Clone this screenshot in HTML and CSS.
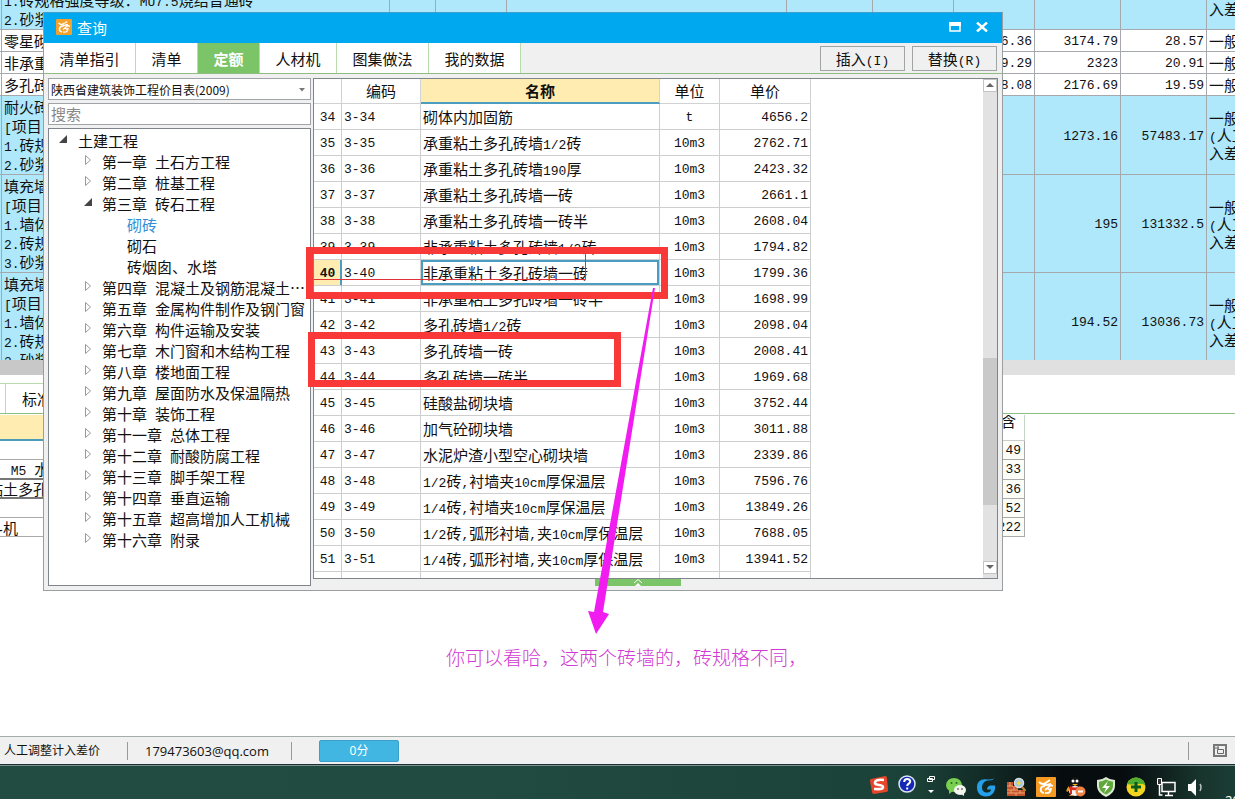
FILE: index.html
```html
<!DOCTYPE html>
<html lang="zh-CN">
<head>
<meta charset="utf-8">
<title>查询</title>
<link rel="stylesheet" href="styles.css">
</head>
<body>
<div class="desktop">
  <main class="app">
    <div class="budget">
      <table class="budget-table">
        <colgroup><col class="c-edge"><col class="c-desc"><col class="c-a"><col class="c-b"><col class="c-c"><col class="c-d"><col class="c-e"><col class="c-e"><col class="c-d"><col class="c-d"><col class="c-f"></colgroup>
        <tbody>
          <tr class="r-first blue"><td></td><td><div class="tail"><span class="m">1.</span>砖规格强度等级：<span class="m">MU7.5</span>烧结普通砖<br><span class="m">2.</span>砂浆</div></td><td></td><td></td><td></td><td></td><td></td><td></td><td></td><td></td><td class="fee"><div class="tail fee-tail">入差</div></td></tr>
          <tr class="r-line"><td></td><td>零星砌</td><td></td><td></td><td></td><td></td><td></td><td class="num">6.36</td><td class="num">3174.79</td><td class="num">28.57</td><td class="fee">一般</td></tr>
          <tr class="r-line"><td></td><td>非承重</td><td></td><td></td><td></td><td></td><td></td><td class="num">9.29</td><td class="num">2323</td><td class="num">20.91</td><td class="fee">一般</td></tr>
          <tr class="r-line"><td></td><td>多孔砖</td><td></td><td></td><td></td><td></td><td></td><td class="num">8.08</td><td class="num">2176.69</td><td class="num">19.59</td><td class="fee">一般</td></tr>
          <tr class="r-four blue"><td></td><td>耐火砖<br><span class="m">[</span>项目<br><span class="m">1.</span>砖规<br><span class="m">2.</span>砂浆</td><td></td><td></td><td></td><td></td><td></td><td></td><td class="num">1273.16</td><td class="num">57483.17</td><td class="fee">一般<br><span class="m">(</span>人工<br>入差</td></tr>
          <tr class="r-five blue"><td></td><td>填充墙<br><span class="m">[</span>项目<br><span class="m">1.</span>墙体<br><span class="m">2.</span>砖规<br><span class="m">3.</span>砂浆</td><td></td><td></td><td></td><td></td><td></td><td></td><td class="num">195</td><td class="num">131332.5</td><td class="fee">一般<br><span class="m">(</span>人工<br>入差</td></tr>
          <tr class="r-five blue"><td></td><td>填充墙<br><span class="m">[</span>项目<br><span class="m">1.</span>墙体<br><span class="m">2.</span>砖规<br><span class="m">3.</span>砂浆</td><td></td><td></td><td></td><td></td><td></td><td></td><td class="num">194.52</td><td class="num">13036.73</td><td class="fee">一般<br><span class="m">(</span>人工<br>入差</td></tr>
        </tbody>
      </table>
    </div>
    <div class="splitter"><div class="splitter-thumb"></div></div>
    <div class="lower-tabs"><div class="lower-tab">标准</div></div>
    <div class="detail">
      <table class="detail-table">
        <colgroup><col class="d-name"><col><col class="d-amount"></colgroup>
        <thead><tr><th class="hot"></th><th></th><th><div class="cut">含</div></th></tr></thead>
        <tbody>
          <tr><td></td><td></td><td class="num">49</td></tr>
          <tr class="strong"><td>、<span class="m"> M5 </span>水</td><td></td><td class="num">33</td></tr>
          <tr class="strong"><td>粘土多孔</td><td></td><td class="num">36</td></tr>
          <tr><td></td><td></td><td class="num">52</td></tr>
          <tr><td>斗机</td><td></td><td class="num">222</td></tr>
        </tbody>
      </table>
    </div>
  </main>

  <footer class="status">
    <span class="status-note">人工调整计入差价</span>
    <span class="status-mail">179473603@qq.com</span>
    <button class="score" type="button">0分</button>
    <span class="status-tool">
      <svg width="14" height="13" viewBox="0 0 14 13"><path d="M1 1h12v11H1z" fill="none" stroke="#777" stroke-width="2"/><path d="M4.500 5.500h6v4h-6zM2 4h4M5 2v3" fill="none" stroke="#666"/></svg>
    </span>
  </footer>

  <div class="taskbar">
    <svg class="narrow" viewBox="0 0 18 20"><path d="M1 4 15 1q2 0 2 2l1 12q0 2-2 2L4 19q-2 0-2-2L0 6q0-2 1-2z" fill="#e5452b"/><path d="M14 5Q5 4 5 8c0 3 8 1 8 4 0 3-7 2-9 2" fill="none" stroke="#fff" stroke-width="2.600"/></svg>
    <svg class="narrow" viewBox="0 0 18 20"><circle cx="9" cy="9" r="8" fill="#1428b4" stroke="#dfe6f5" stroke-width="1.500"/><path d="M6.200 7q0-3 3-3t3 2.600c0 2-3 2-3 4.400M9.200 12.500v2" fill="none" stroke="#fff" stroke-width="2"/></svg>
    <svg class="tiny" viewBox="0 0 10 20"><path d="M3.500 1.500h5v3h-5zM1.500 3.500h5v3h-5z" fill="#17342d" stroke="#fff"/><path d="M2 15h6l-3 3z" fill="#fff"/></svg>
    <svg viewBox="0 0 20 20"><ellipse cx="8" cy="8" rx="8" ry="7" fill="#78cf50"/><path d="M3 13v4l4-3z" fill="#78cf50"/><circle cx="5.500" cy="6" r="1" fill="#2d6b25"/><circle cx="10.500" cy="6" r="1" fill="#2d6b25"/><ellipse cx="14" cy="13" rx="6" ry="5" fill="#f3f5ef"/><path d="m15 17 3 2v-3z" fill="#f3f5ef"/><circle cx="12" cy="12" r="1" fill="#777"/><circle cx="16" cy="12" r="1" fill="#777"/></svg>
    <svg viewBox="0 0 20 20"><path d="M19 1q-3 3-7 2.500C8 4 6 7 6 10.500c0 3 2 5 5 5s4-2 4-3h-4q0-3 3-4h5c1 6-3 11-9 11-6 0-9-4-9-9 0-6 4-9 10-8 4 0 6-.5 8-1.500z" fill="#25a0ea"/></svg>
    <svg viewBox="0 0 20 20"><path d="M1 5h6v4h5v4h7v6H1z" fill="#c3562e"/><path d="M1 9h6M1 13h11M1 16h18M4 5v4M8 9v4M5 13v3M14 13v3M10 16v3" stroke="#f0a36e"/><circle cx="13" cy="6" r="4.500" fill="#9cc8e8" stroke="#d9dde0" stroke-width="1.500"/><path d="m16 10 3.500 4" stroke="#b98336" stroke-width="2.500"/><path d="m13 3 1 2 2 1-2 1-1 2-1-2-2-1 2-1z" fill="#f7d63f"/></svg>
    <svg viewBox="0 0 20 20"><rect width="20" height="20" rx="1" fill="#f49a22"/><path d="M3 5q4 4 8 0M11 5l3-2M5 10l5-2 5-1M8 16c-5-1-4-7 1-7M9 13l6-5 2 1M9 16q6 1 6-5M11 11l3 2" fill="none" stroke="#fff" stroke-width="1.800"/></svg>
    <svg viewBox="0 0 20 20"><ellipse cx="9" cy="7" rx="5.500" ry="7" fill="#141414"/><ellipse cx="9" cy="14" rx="6" ry="5" fill="#f4f4f4"/><path d="M3 9q-4 4-2 6l3-2zM5 18l-3 1h7z" fill="#e99b23"/><circle cx="7" cy="4" r="1.500" fill="#fff"/><circle cx="11" cy="4" r="1.500" fill="#fff"/><path d="M6 7h6l-3 2z" fill="#f5b324"/><path d="M4 9q5 3 10 0v3q-5 2-8 1v4H4z" fill="#d92b22"/><circle cx="14.500" cy="14.500" r="5" fill="#f08243"/><path d="M12 14.500h5" stroke="#fff" stroke-width="2"/></svg>
    <svg viewBox="0 0 20 20"><path d="M10 0q4 3 9 3v6q0 7-9 11-9-4-9-11V3q5 0 9-3z" fill="#dbe9d2"/><path d="M10 2.500q3 2 7 2.300V9q0 5-7 8.500Q3 14 3 9V4.800q4-.3 7-2.300z" fill="#5fa83a"/><path d="m12 4-6 7h4l-2 5 6-7h-4z" fill="#fff"/></svg>
    <svg viewBox="0 0 20 20"><circle cx="10" cy="10" r="9.500" fill="#f3d521"/><path d="M1 7Q4 0 11 .5q7 1 8.500 8Q17 6 12 7T1 7z" fill="#4dae32"/><path d="M10 5v10M5 10h10" stroke="#075c1b" stroke-width="3"/></svg>
    <svg viewBox="0 0 20 20"><path d="M6 5.500h13v9H6z" fill="#20302f" stroke="#fff" stroke-width="1.500"/><path d="M12.500 15v3M9 18.500h8" stroke="#fff" stroke-width="1.500"/><path d="M1.500 1.500h4v6h-4z" fill="#333" stroke="#fff"/><path d="M3.500 8v10h3" fill="none" stroke="#fff" stroke-width="1.500"/></svg>
    <svg viewBox="0 0 20 20"><path d="M2 7h3l5-5v17l-5-5H2z" fill="#fff"/><path d="M14 7q2 3 0 7" fill="none" stroke="#b8c4c1" stroke-width="1.500"/></svg>
    <span class="clock">20</span>
  </div>

  <section class="dialog" aria-label="查询">
    <header class="titlebar">
      <svg width="16" height="16" viewBox="0 0 16 16"><rect width="16" height="16" rx="1" fill="#f4a12c"/><path d="M2.500 4q3 3 6 0M9 4l2-1.500M4 8l4-1.500 4-1M6 13c-4-1-3-6 1-6M7 10.500l5-4 2 1M7 13q5 1 5-4M9 9l2 1.500" fill="none" stroke="#fff" stroke-width="1.400"/></svg>
      <h1>查询</h1>
      <button type="button" class="win-btn" aria-label="最大化"><svg width="12" height="10" viewBox="0 0 12 10"><path d="M1 1h10v8H1z" fill="none" stroke="#fff" stroke-width="1.500"/><path d="M0 0h12v4H0z" fill="#fff"/></svg></button>
      <button type="button" class="win-btn" aria-label="关闭"><svg width="12" height="10" viewBox="0 0 12 10"><path d="m1 .5 10 9M11 .5l-10 9" stroke="#fff" stroke-width="2.400"/></svg></button>
    </header>
    <nav class="tabs">
      <button type="button" class="tab w-l">清单指引</button>
      <button type="button" class="tab w-s">清单</button>
      <button type="button" class="tab w-s active">定额</button>
      <button type="button" class="tab w-m">人材机</button>
      <button type="button" class="tab w-l">图集做法</button>
      <button type="button" class="tab w-l">我的数据</button>
      <div class="actions">
        <button type="button">插入<span class="m">(I)</span></button>
        <button type="button">替换<span class="m">(R)</span></button>
      </div>
    </nav>
    <div class="body">
      <aside class="side">
        <div class="combo">
          <select aria-label="定额库"><option>陕西省建筑装饰工程价目表(2009)</option></select>
          <svg width="6" height="4" viewBox="0 0 6 4"><path d="M0 0h6L3 3.500z" fill="#777"/></svg>
        </div>
        <input class="search" type="text" placeholder="搜索" aria-label="搜索">
        <ul class="tree">
          <li class="l0"><svg class="tw" viewBox="0 0 10 10"><path d="M9 1v8H1z" fill="#444"/></svg>土建工程</li>
          <li class="l1"><svg class="tw" viewBox="0 0 10 10"><path d="M2.500.5v9L7.500 5z" fill="none" stroke="#999"/></svg><span>第一章</span><span>土石方工程</span></li>
          <li class="l1"><svg class="tw" viewBox="0 0 10 10"><path d="M2.500.5v9L7.500 5z" fill="none" stroke="#999"/></svg><span>第二章</span><span>桩基工程</span></li>
          <li class="l1"><svg class="tw" viewBox="0 0 10 10"><path d="M9 1v8H1z" fill="#444"/></svg><span>第三章</span><span>砖石工程</span></li>
          <li class="l2 current">砌砖</li>
          <li class="l2">砌石</li>
          <li class="l2">砖烟囱、水塔</li>
          <li class="l1"><svg class="tw" viewBox="0 0 10 10"><path d="M2.500.5v9L7.500 5z" fill="none" stroke="#999"/></svg><span>第四章</span><span>混凝土及钢筋混凝土⋯</span></li>
          <li class="l1"><svg class="tw" viewBox="0 0 10 10"><path d="M2.500.5v9L7.500 5z" fill="none" stroke="#999"/></svg><span>第五章</span><span>金属构件制作及钢门窗</span></li>
          <li class="l1"><svg class="tw" viewBox="0 0 10 10"><path d="M2.500.5v9L7.500 5z" fill="none" stroke="#999"/></svg><span>第六章</span><span>构件运输及安装</span></li>
          <li class="l1"><svg class="tw" viewBox="0 0 10 10"><path d="M2.500.5v9L7.500 5z" fill="none" stroke="#999"/></svg><span>第七章</span><span>木门窗和木结构工程</span></li>
          <li class="l1"><svg class="tw" viewBox="0 0 10 10"><path d="M2.500.5v9L7.500 5z" fill="none" stroke="#999"/></svg><span>第八章</span><span>楼地面工程</span></li>
          <li class="l1"><svg class="tw" viewBox="0 0 10 10"><path d="M2.500.5v9L7.500 5z" fill="none" stroke="#999"/></svg><span>第九章</span><span>屋面防水及保温隔热</span></li>
          <li class="l1"><svg class="tw" viewBox="0 0 10 10"><path d="M2.500.5v9L7.500 5z" fill="none" stroke="#999"/></svg><span>第十章</span><span>装饰工程</span></li>
          <li class="l1"><svg class="tw" viewBox="0 0 10 10"><path d="M2.500.5v9L7.500 5z" fill="none" stroke="#999"/></svg><span>第十一章</span><span>总体工程</span></li>
          <li class="l1"><svg class="tw" viewBox="0 0 10 10"><path d="M2.500.5v9L7.500 5z" fill="none" stroke="#999"/></svg><span>第十二章</span><span>耐酸防腐工程</span></li>
          <li class="l1"><svg class="tw" viewBox="0 0 10 10"><path d="M2.500.5v9L7.500 5z" fill="none" stroke="#999"/></svg><span>第十三章</span><span>脚手架工程</span></li>
          <li class="l1"><svg class="tw" viewBox="0 0 10 10"><path d="M2.500.5v9L7.500 5z" fill="none" stroke="#999"/></svg><span>第十四章</span><span>垂直运输</span></li>
          <li class="l1"><svg class="tw" viewBox="0 0 10 10"><path d="M2.500.5v9L7.500 5z" fill="none" stroke="#999"/></svg><span>第十五章</span><span>超高增加人工机械</span></li>
          <li class="l1"><svg class="tw" viewBox="0 0 10 10"><path d="M2.500.5v9L7.500 5z" fill="none" stroke="#999"/></svg><span>第十六章</span><span>附录</span></li>
        </ul>
      </aside>
      <div class="main">
        <div class="panel">
          <div class="viewport">
            <table class="quota">
              <colgroup><col class="q-no"><col class="q-code"><col class="q-name"><col class="q-unit"><col class="q-price"></colgroup>
              <thead><tr><th></th><th>编码</th><th class="hot">名称</th><th>单位</th><th>单价</th></tr></thead>
              <tbody>
                <tr><td>34</td><td>3-34</td><td>砌体内加固筋</td><td>t</td><td>4656.2</td></tr>
                <tr><td>35</td><td>3-35</td><td>承重粘土多孔砖墙<span class="m">1/2</span>砖</td><td>10m3</td><td>2762.71</td></tr>
                <tr><td>36</td><td>3-36</td><td>承重粘土多孔砖墙<span class="m">190</span>厚</td><td>10m3</td><td>2423.32</td></tr>
                <tr><td>37</td><td>3-37</td><td>承重粘土多孔砖墙一砖</td><td>10m3</td><td>2661.1</td></tr>
                <tr><td>38</td><td>3-38</td><td>承重粘土多孔砖墙一砖半</td><td>10m3</td><td>2608.04</td></tr>
                <tr><td>39</td><td>3-39</td><td>非承重粘土多孔砖墙<span class="m">1/2</span>砖</td><td>10m3</td><td>1794.82</td></tr>
                <tr class="selected"><td>40</td><td>3-40</td><td>非承重粘土多孔砖墙一砖</td><td>10m3</td><td>1799.36</td></tr>
                <tr><td>41</td><td>3-41</td><td>非承重粘土多孔砖墙一砖半</td><td>10m3</td><td>1698.99</td></tr>
                <tr><td>42</td><td>3-42</td><td>多孔砖墙<span class="m">1/2</span>砖</td><td>10m3</td><td>2098.04</td></tr>
                <tr><td>43</td><td>3-43</td><td>多孔砖墙一砖</td><td>10m3</td><td>2008.41</td></tr>
                <tr><td>44</td><td>3-44</td><td>多孔砖墙一砖半</td><td>10m3</td><td>1969.68</td></tr>
                <tr><td>45</td><td>3-45</td><td>硅酸盐砌块墙</td><td>10m3</td><td>3752.44</td></tr>
                <tr><td>46</td><td>3-46</td><td>加气砼砌块墙</td><td>10m3</td><td>3011.88</td></tr>
                <tr><td>47</td><td>3-47</td><td>水泥炉渣小型空心砌块墙</td><td>10m3</td><td>2339.86</td></tr>
                <tr><td>48</td><td>3-48</td><td><span class="m">1/2</span>砖<span class="m">,</span>衬墙夹<span class="m">10cm</span>厚保温层</td><td>10m3</td><td>7596.76</td></tr>
                <tr><td>49</td><td>3-49</td><td><span class="m">1/4</span>砖<span class="m">,</span>衬墙夹<span class="m">10cm</span>厚保温层</td><td>10m3</td><td>13849.26</td></tr>
                <tr><td>50</td><td>3-50</td><td><span class="m">1/2</span>砖<span class="m">,</span>弧形衬墙<span class="m">,</span>夹<span class="m">10cm</span>厚保温层</td><td>10m3</td><td>7688.05</td></tr>
                <tr><td>51</td><td>3-51</td><td><span class="m">1/4</span>砖<span class="m">,</span>弧形衬墙<span class="m">,</span>夹<span class="m">10cm</span>厚保温层</td><td>10m3</td><td>13941.52</td></tr>
                <tr><td></td><td></td><td></td><td></td><td></td></tr>
              </tbody>
            </table>
          </div>
          <div class="scrollbar">
            <button type="button" aria-label="向上"><svg width="8" height="5" viewBox="0 0 8 5"><path d="M4 0l4 4H0z" fill="#666"/></svg></button>
            <div class="before"></div>
            <div class="thumb"></div>
            <div class="after"></div>
            <button type="button" aria-label="向下"><svg width="8" height="5" viewBox="0 0 8 5"><path d="M0 0h8L4 4z" fill="#666"/></svg></button>
          </div>
        </div>
        <button type="button" class="expand" aria-label="展开"><svg width="10" height="7" viewBox="0 0 10 7"><path d="M1 4l4-3.500L9 4" fill="none" stroke="#fff"/><path d="M2 7l3-3 3 3z" fill="#fff"/></svg></button>
      </div>
    </div>
  </section>

  <svg class="marks" width="1235" height="799" viewBox="0 0 1235 799">
    <path d="M314 279.500h271.500V254" fill="none" stroke="#e03038"/>
    <path d="M309.500 250.500h355v45h-355zM311.500 335.500h306v48h-306z" fill="none" stroke="#f93838" stroke-width="7"/>
    <path d="M655 288 603 612l6 2-13 20-8-23 6 1 59-324z" fill="#f01cf0"/>
  </svg>
  <p class="remark">你可以看哈，这两个砖墙的，砖规格不同，</p>
</div>
</body>
</html>
```
FILE: styles.css
```css
* { box-sizing: border-box; }
body {
  margin: 0;
  font: 15px/19px "Noto Sans CJK SC", sans-serif;
  color: #111;
  background: #fff;
}
button, input, select { font: inherit; color: inherit; margin: 0; }
table { border-collapse: separate; border-spacing: 0; table-layout: fixed; }
th, td { padding: 0; white-space: nowrap; overflow: hidden; }

.m, .num { font-family: "Liberation Mono", "Noto Sans CJK SC", monospace; font-size: 13px; }
.m { white-space: pre; line-height: 1; }

.desktop {
  position: relative;
  display: flex;
  flex-direction: column;
  height: 100vh;
  overflow: hidden;
}
.app { flex: 1; min-height: 0; overflow: hidden; }

/* budget sheet behind the dialog */
.budget { height: 360px; overflow: hidden; }
.budget-table { width: 1307px; }
.c-edge { width: 2px; }
.c-desc { width: 388px; }
.c-a { width: 46px; }
.c-b { width: 71px; }
.c-c { width: 280px; }
.c-d { width: 86px; }
.c-e { width: 81px; }
.c-f { width: 100px; }
.budget-table td {
  border-right: 1px solid #a5a9ad;
  border-bottom: 1px solid #a5a9ad;
  padding: 0 2px;
}
.budget-table td:first-child { padding: 0; }
.blue { background: #aee8fa; }
.budget-table .num { padding-top: 2px; text-align: right; }
.budget-table .fee { line-height: 17px; }
.r-first { height: 30px; }
.tail { height: 39px; margin-top: -10px; }
.fee-tail { padding-top: 10px; }
.r-line { height: 22px; }
.r-four { height: 79px; }
.r-five { height: 98px; }

.splitter { height: 15px; background: #e0e0e0; }
.splitter-thumb { width: 60%; height: 15px; background: #c8c8c8; }
.lower-tabs {
  height: 39px;
  padding-top: 8px;
  border-bottom: 1px solid #8cbf82;
}
.lower-tab {
  width: 600px;
  height: 30px;
  border-top: 1px solid #b9dcae;
  padding-left: 22px;
  line-height: 30px;
  background: linear-gradient(90deg, #fff 5px, #b9dcae 5px, #b9dcae 6px, #fff 6px);
}
.detail { padding-top: 1px; overflow: hidden; }
.detail-table { width: 1037px; margin-left: -12px; }
.d-name { width: 400px; }
.d-amount { width: 60px; }
.detail-table th { height: 26px; border-bottom: 1px solid #ccc; border-right: 1px solid #c5d6c5; font-weight: 400; vertical-align: top; }
.detail-table .hot { background: #ffecb0; border-bottom: 2px solid #4a9cb8; }
.cut { height: 25px; line-height: 12px; overflow: hidden; padding-left: 28px; }
.detail-table td { height: 19px; border-bottom: 1px solid #aaa; line-height: 17px; }
.detail-table .strong td:first-child { border-bottom: 2px solid #777; }
.detail-table .num { text-align: right; padding-right: 3px; background: #fdfdf8; border-right: 1px solid #aaa; }

/* status bar */
.status {
  display: flex;
  align-items: center;
  height: 28px;
  border-top: 1px solid #a5ada8;
  background: #f0f0f0;
  font: 12px/18px "Noto Sans", "Noto Sans CJK SC", sans-serif;
}
.status-note { width: 128px; padding-left: 4px; border-right: 1px solid #999; }
.status-mail { width: 164px; padding-left: 17px; border-right: 1px solid #999; font-family: "Open Sans", sans-serif; font-size: 13px; }
.score {
  width: 80px;
  height: 22px;
  margin-left: 27px;
  padding: 0;
  border: 1px solid #3a9fc8;
  border-radius: 2px;
  background: #42b6e3;
  color: #fff;
}
.status-tool { display: flex; align-items: center; height: 18px; margin-left: auto; padding: 0 8px 0 24px; border-left: 1px solid #999; }

/* task bar */
.taskbar {
  display: flex;
  justify-content: flex-end;
  gap: 10px;
  height: 35px;
  padding-top: 12px;
  border-top: 1px solid #1b2f38;
  box-shadow: inset 0 1px #7d938d;
  background: linear-gradient(90deg, #224c41 0%, #214a40 40%, #1b4238 74%, #102521 81%, #070c0e 86%, #070c0e 91%, #17332c 97%, #1b3d35 100%);
}
.taskbar svg { width: 20px; height: 20px; flex: none; }
.taskbar .narrow { width: 18px; margin-top: -2px; }
.taskbar .tiny { width: 10px; margin-top: -2px; }
.clock { width: 20px; margin-left: -1px; padding: 10px 0 0 10px; overflow: hidden; font: 13px/26px "Noto Sans", sans-serif; color: #fff; }

/* dialog window */
.dialog {
  position: absolute;
  left: 43px;
  right: 232px;
  top: 12px;
  bottom: 208px;
  display: flex;
  flex-direction: column;
  border: 1px solid #9a9ea0;
  border-top-color: #3f9fd0;
  background: #f0f0f0;
}
.titlebar { display: flex; align-items: center; height: 30px; padding: 0 8px 2px 12px; background: #00a8f0; color: #fff; }
.titlebar h1 { flex: 1; margin: 0 0 0 5px; font-size: 15px; font-weight: 400; }
.win-btn { display: flex; align-items: center; justify-content: center; width: 29px; height: 24px; padding: 0; border: 0; background: none; }
.win-btn:last-child { width: 25px; }

.tabs { display: flex; height: 31px; border-bottom: 1px solid #8fbc82; }
.tab { border: 0; border-right: 1px solid #b9dcae; background: #fff; padding: 1px 0 0; }
.tab.active { background: #7cc468; color: #fff; font-weight: 700; }
.w-s { width: 62px; }
.w-m { width: 77px; }
.w-l { width: 92px; }
.actions { display: flex; gap: 7px; margin-left: auto; padding: 3px 5px 2px 0; }
.actions button { width: 85px; padding: 0; border: 1px solid #a0a4a4; background: #f0f0f0; line-height: 20px; }

.body { flex: 1; min-height: 0; display: flex; gap: 2px; padding: 4px; }
.side { width: 263px; display: flex; flex-direction: column; gap: 3px; }
.combo { position: relative; height: 22px; }
.combo select { width: 100%; height: 22px; padding: 0 2px; border: 1px solid #a0a4a8; border-radius: 0; background: #fff; font-size: 12px; appearance: none; }
.combo svg { position: absolute; right: 6px; top: 10px; }
.search { height: 22px; padding: 0 2px 2px; border: 1px solid #a0a4a8; background: #fff; }
.search::placeholder { color: #888; opacity: 1; }
.tree { flex: 1; margin: 0; padding: 1px 0 0; list-style: none; border: 1px solid #7f858a; background: #fff; overflow: hidden; }
.tree li { display: flex; gap: 8px; height: 21px; line-height: 21px; white-space: nowrap; }
.tw { flex: none; width: 10px; height: 10px; margin-top: 4px; }
.l0 { padding-left: 9px; }
.tree .l0 { gap: 10px; }
.l1 { padding-left: 34px; }
.l1 .tw { margin-right: 1px; }
.l2 { padding-left: 78px; }
.current { color: #2f8fd8; }

.main { flex: 1; min-width: 0; display: flex; flex-direction: column; }
.panel { flex: 1; min-height: 0; display: flex; border: 1px solid #7f858a; background: #fff; }
.viewport { flex: 1; min-width: 0; overflow: hidden; }
.quota { width: 497px; }
.q-no { width: 28px; }
.q-code { width: 79px; }
.q-name { width: 239px; }
.q-unit { width: 60px; }
.q-price { width: 91px; }
.quota th { height: 25px; padding-bottom: 2px; border-right: 1px solid #d0d2d4; border-bottom: 1px solid #d0d2d4; font-weight: 400; }
.quota th.hot { padding-bottom: 0; background: #ffecb0; border-bottom: 2px solid #4a9cc0; font-weight: 700; }
.quota td {
  height: 26px;
  padding: 3px 2px 0;
  border-right: 1px solid #ccced0;
  border-bottom: 1px solid #ccced0;
  font-family: "Liberation Mono", monospace;
  font-size: 13px;
  line-height: 22px;
}
.quota td:nth-child(1), .quota td:nth-child(4) { text-align: center; }
.quota td:nth-child(3) { padding-top: 0; font-family: "Noto Sans CJK SC", sans-serif; font-size: 15px; }
.quota td:nth-child(5) { text-align: right; }
.quota .selected td:nth-child(1) { background: #ffecb0; font-weight: 700; box-shadow: inset -1px 0 #4a9cc0; border-right-color: #4a9cc0; }
.quota .selected td:nth-child(3) { box-shadow: inset 0 0 0 2px #4a9cc0; }

.scrollbar { width: 14px; display: flex; flex-direction: column; background: #e2e2e2; }
.scrollbar button { display: flex; align-items: center; justify-content: center; height: 13px; padding: 0; border: 1px solid #c4c4c4; background: #fff; }
.before { flex: 265; }
.thumb { flex: 147; background: #c9c9c9; }
.after { flex: 56; }
.scrollbar button:last-child { margin-bottom: 4px; }
.expand { display: flex; justify-content: center; align-self: center; width: 86px; height: 7px; margin-right: 36px; padding: 0; border: 0; background: #7cc468; }

/* hand-drawn annotations over the windows */
.marks { position: absolute; left: 0; top: 0; pointer-events: none; }
.remark { position: absolute; left: 446px; top: 644px; margin: 0; font-size: 19px; font-weight: 300; line-height: 26px; color: #d238d2; white-space: nowrap; }
```
